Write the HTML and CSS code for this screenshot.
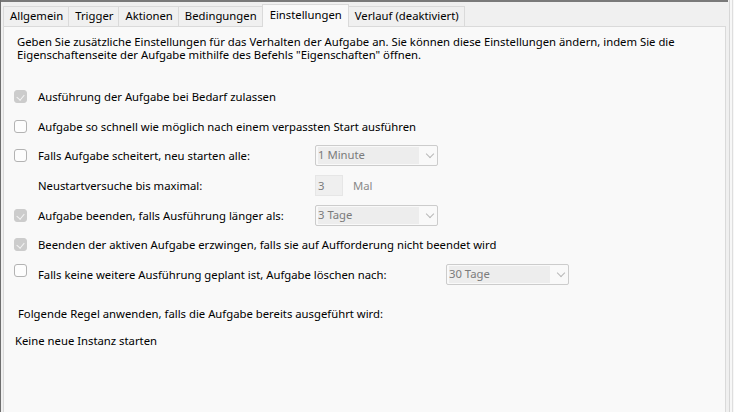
FILE: index.html
```html
<!DOCTYPE html>
<html lang="de">
<head>
  <meta charset="UTF-8" />
  <title>Aufgabe - Einstellungen</title>
  <link rel="stylesheet" href="styles.css">
</head>
<body>
  <div class="window">
    <div class="dialog">
      <div class="tabs">
        <div class="tab">Allgemein</div>
        <div class="tab">Trigger</div>
        <div class="tab">Aktionen</div>
        <div class="tab">Bedingungen</div>
        <div class="tab active">Einstellungen</div>
        <div class="tab">Verlauf (deaktiviert)</div>
      </div>
      <div class="panel">
        <p class="intro">Geben Sie zusätzliche Einstellungen für das Verhalten der Aufgabe an. Sie können diese Einstellungen ändern, indem Sie die Eigenschaftenseite der Aufgabe mithilfe des Befehls "Eigenschaften" öffnen.</p>

        <div class="row">
          <span class="check checked"></span>
          <span class="label">Ausführung der Aufgabe bei Bedarf zulassen</span>
        </div>
        <div class="row">
          <span class="check"></span>
          <span class="label">Aufgabe so schnell wie möglich nach einem verpassten Start ausführen</span>
        </div>
        <div class="row">
          <span class="check"></span>
          <span class="label wide">Falls Aufgabe scheitert, neu starten alle:</span>
          <div class="select"><span class="value">1 Minute</span><span class="chevron"></span></div>
        </div>
        <div class="row">
          <span class="check none"></span>
          <span class="label wide">Neustartversuche bis maximal:</span>
          <div class="spin">3</div>
          <span class="unit">Mal</span>
        </div>
        <div class="row">
          <span class="check checked"></span>
          <span class="label wide">Aufgabe beenden, falls Ausführung länger als:</span>
          <div class="select"><span class="value">3 Tage</span><span class="chevron"></span></div>
        </div>
        <div class="row">
          <span class="check checked"></span>
          <span class="label">Beenden der aktiven Aufgabe erzwingen, falls sie auf Aufforderung nicht beendet wird</span>
        </div>
        <div class="row top">
          <span class="check"></span>
          <span class="label wider">Falls keine weitere Ausführung geplant ist, Aufgabe löschen nach:</span>
          <div class="select"><span class="value">30 Tage</span><span class="chevron"></span></div>
        </div>

        <p class="rule">Folgende Regel anwenden, falls die Aufgabe bereits ausgeführt wird:</p>
        <p class="instance">Keine neue Instanz starten</p>
      </div>
    </div>
    <div class="edge"></div>
  </div>
</body>
</html>
```

FILE: styles.css
```css
body {
  margin: 0;
  font-family: 'Noto Sans', 'Open Sans', sans-serif;
  font-size: 11.3px;
  color: #000;
  background: #f0f0f0;
}
.window {
  display: flex;
  height: 412px;
  border-left: 1px solid #6e6e6e;
  box-sizing: border-box;
  overflow: hidden;
}
.dialog {
  width: 727px;
  border-top: 2px solid #7a7a7a;
  display: flex;
  flex-direction: column;
  box-sizing: border-box;
}
.edge {
  flex: 1;
  background: linear-gradient(to right, #f0f0f0 0, #f0f0f0 1px, #d6d6d6 1px, #d6d6d6 2px, #f7f7f7 2px, #f7f7f7 4px, #dedede 4px, #dedede 5px, #f7f7f7 5px);
}
.tabs {
  display: flex;
  padding: 2px 0 0 2px;
  height: 22px;
  align-items: flex-end;
}
.tab {
  height: 19px;
  line-height: 17px;
  padding: 0 5px 0 6px;
  border: 1px solid #dadada;
  border-bottom: none;
  border-right: none;
  background: #f0f0f0;
  color: #000;
  white-space: nowrap;
}
.tab:nth-child(6) {
  border-right: 1px solid #dadada;
}
.tab.active {
  height: 22px;
  line-height: 19px;
  background: #f9f9f9;
  border-color: #dadada;
  border-right: 1px solid #dadada;
  margin-right: -1px;
  position: relative;
  z-index: 1;
  margin-bottom: -1px;
  padding: 0 6px 0 7px;
}
.panel {
  flex: 1;
  margin-left: 2px;
  margin-right: 2px;
  background: #f9f9f9;
  border: 1px solid #dadada;
  border-bottom: none;
  padding: 7.5px 0 0 10px;
}
.intro {
  margin: 0;
  width: 670px;
  line-height: 13.5px;
  padding-left: 3px;
}
.row {
  display: flex;
  align-items: center;
  height: 29.7px;
}
.row:first-of-type {
  margin-top: 20px;
}
.check {
  width: 11px;
  height: 11px;
  border: 1px solid #b3b3b3;
  border-radius: 3px;
  background: #fdfdfd;
  margin-right: 11px;
  flex-shrink: 0;
  position: relative;
}
.check.none {
  visibility: hidden;
}
.check.checked {
  background: #cccccc;
  border-color: #cccccc;
}
.check.checked::after {
  content: "";
  position: absolute;
  left: 3px;
  top: 2px;
  width: 4px;
  height: 6px;
  border-right: 1px solid #f4f4f4;
  border-bottom: 1px solid #f4f4f4;
  transform: rotate(40deg);
}
.row.top .check {
  align-self: flex-start;
  margin-top: 4px;
}
.label {
  white-space: nowrap;
}
.label.wide {
  width: 277px;
}
.label.wider {
  width: 408px;
}
.select {
  width: 123px;
  height: 21px;
  border: 1px solid #cccccc;
  border-radius: 2px;
  background: #f9f9f9;
  display: flex;
  align-items: center;
  padding: 2px;
  box-sizing: border-box;
}
.select .value {
  width: 101px;
  height: 17px;
  line-height: 16px;
  background: #ededed;
  color: #7b7b7b;
}
.chevron {
  width: 5px;
  height: 5px;
  border-right: 1px solid #b8b8b8;
  border-bottom: 1px solid #b8b8b8;
  transform: rotate(45deg);
  margin: -3px 0 0 8px;
}
.spin {
  width: 28px;
  height: 21px;
  box-sizing: border-box;
  border: 1px solid #e6e6e6;
  background: #efefef;
  color: #7b7b7b;
  line-height: 19px;
  padding-left: 2px;
}
.unit {
  color: #8a8a8a;
  margin-left: 10px;
}
.rule {
  margin: 17px 0 0 4px;
}
.instance {
  margin: 12px 0 0 1px;
}
```
